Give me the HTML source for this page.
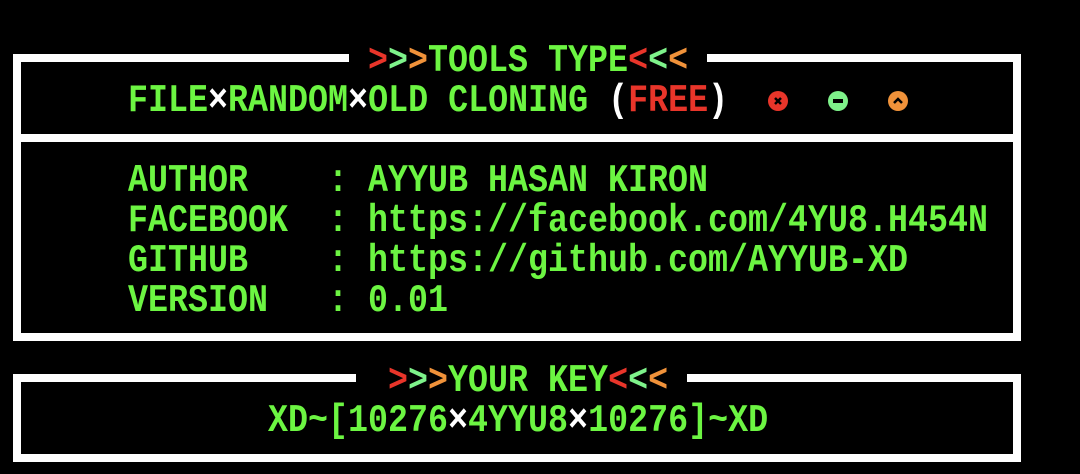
<!DOCTYPE html>
<html><head><style>
body{margin:0;width:1080px;height:474px;background:#000;overflow:hidden;position:relative;font-family:"Liberation Mono","DejaVu Sans Mono",monospace;font-weight:bold;font-size:33.33px;color:#6cf542}
.l{position:absolute;line-height:40px;white-space:pre;height:40px;transform:translateY(2px) scaleY(1.18);transform-origin:50% 55%}
.b{position:absolute;background:#fff}
.r{color:#e8352a}.g{color:#7ef28a}.o{color:#f0923a}.w{color:#fff}
.c{position:absolute;width:20px;height:20px;border-radius:50%}
</style></head><body>
<!-- box1 -->
<div class="b" style="left:13px;top:54px;width:336px;height:8px"></div>
<div class="b" style="left:707px;top:54px;width:314px;height:8px"></div>
<div class="b" style="left:13px;top:54px;width:8px;height:287px"></div>
<div class="b" style="left:1013px;top:54px;width:8px;height:287px"></div>
<div class="b" style="left:13px;top:134px;width:1008px;height:8px"></div>
<div class="b" style="left:13px;top:333px;width:1008px;height:8px"></div>
<div class="l" style="left:368px;top:40px"><span class="r">&gt;</span><span class="g">&gt;</span><span class="o">&gt;</span>TOOLS TYPE<span class="r">&lt;</span><span class="g">&lt;</span><span class="o">&lt;</span></div>
<div class="l" style="left:128px;top:80px">FILE<span class="w">×</span>RANDOM<span class="w">×</span>OLD CLONING <span class="w">(</span><span class="r">FREE</span><span class="w">)</span></div>
<div class="c" style="left:768px;top:91px;background:#e8352a"><svg width="20" height="20" style="position:absolute;left:0;top:0"><path d="M7 7 L13 13 M13 7 L7 13" stroke="#000" stroke-width="2.5" fill="none"/></svg></div>
<div class="c" style="left:828px;top:91px;background:#7ef28a"><div style="position:absolute;left:5px;top:8px;width:10px;height:4px;background:#000"></div></div>
<div class="c" style="left:888px;top:91px;background:#f0923a"><svg width="20" height="20" style="position:absolute;left:0;top:0"><path d="M6 12 L10 8 L14 12" stroke="#000" stroke-width="2.5" fill="none"/></svg></div>
<div class="l" style="left:128px;top:160px">AUTHOR    : AYYUB HASAN KIRON</div>
<div class="l" style="left:128px;top:200px">FACEBOOK  : https://facebook.com/4YU8.H454N</div>
<div class="l" style="left:128px;top:240px">GITHUB    : https://github.com/AYYUB-XD</div>
<div class="l" style="left:128px;top:280px">VERSION   : 0.01</div>
<!-- box2 -->
<div class="b" style="left:13px;top:374px;width:343px;height:8px"></div>
<div class="b" style="left:687px;top:374px;width:334px;height:8px"></div>
<div class="b" style="left:13px;top:374px;width:8px;height:88px"></div>
<div class="b" style="left:1013px;top:374px;width:8px;height:88px"></div>
<div class="b" style="left:13px;top:454px;width:1008px;height:8px"></div>
<div class="l" style="left:388px;top:360px"><span class="r">&gt;</span><span class="g">&gt;</span><span class="o">&gt;</span>YOUR KEY<span class="r">&lt;</span><span class="g">&lt;</span><span class="o">&lt;</span></div>
<div class="l" style="left:268px;top:400px">XD~[10276<span class="w">×</span>4YYU8<span class="w">×</span>10276]~XD</div>
</body></html>
